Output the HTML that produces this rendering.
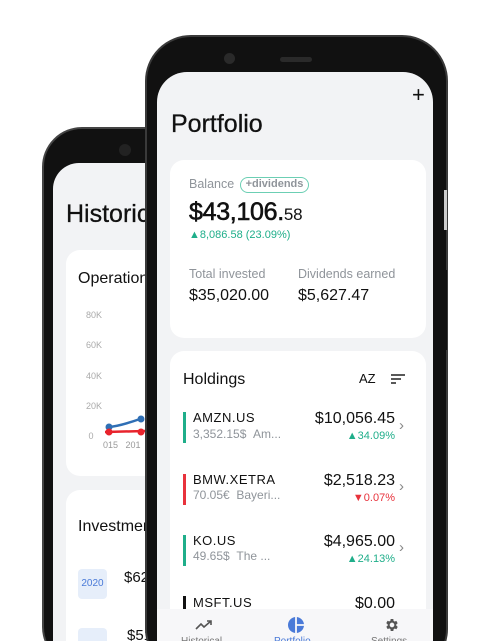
<!DOCTYPE html><html style="width:504px;height:641px;overflow:hidden"><head><style>
*{margin:0;padding:0;box-sizing:border-box}
body{width:504px;height:641px;overflow:hidden;background:#fff;font-family:"Liberation Sans",sans-serif;position:relative}
.a{position:absolute}
.g{color:#8f949a}
.t{color:#1fae8a}
.r{color:#e8323c}
</style></head><body>
<!-- back phone -->
<div class="a" style="left:42px;top:127px;width:200px;height:540px;background:#111;border-radius:40px;border:2px solid #444"></div>
<div class="a" style="left:53px;top:163px;width:180px;height:478px;background:#f2f3f5;border-radius:26px 26px 0 0"></div>
<div class="a" style="left:119px;top:144px;width:12px;height:12px;border-radius:50%;background:#222"></div>
<div class="a" style="left:66px;top:200px;font-size:25px;color:#111;-webkit-text-stroke:.3px #111">Historical</div>
<div class="a" style="left:66px;top:250px;width:120px;height:226px;background:#fff;border-radius:14px"></div>
<div class="a" style="left:78px;top:270px;font-size:16px;color:#111">Operations</div>
<div class="a g" style="left:86px;top:300px;font-size:9px;line-height:30.3px;color:#aaa">80K<br>60K<br>40K<br>20K<br>&nbsp;0</div>
<svg class="a" style="left:100px;top:410px" width="60" height="40"><path d="M9 17 Q20 16 40 9" stroke="#2f6fb5" stroke-width="2.5" fill="none"/><path d="M5 22 L45 21" stroke="#e8232c" stroke-width="2.5"/><circle cx="9" cy="17" r="3.5" fill="#2f6fb5"/><circle cx="41" cy="9" r="3.5" fill="#2f6fb5"/><circle cx="9" cy="22" r="3.5" fill="#e8232c"/><circle cx="41" cy="22" r="3.5" fill="#e8232c"/></svg>
<div class="a" style="left:103px;top:440px;font-size:9px;color:#999">015&nbsp;&nbsp;&nbsp;201</div>
<div class="a" style="left:66px;top:490px;width:120px;height:151px;background:#fff;border-radius:14px 14px 0 0"></div>
<div class="a" style="left:78px;top:518px;font-size:16px;color:#111">Investments</div>
<div class="a" style="left:78px;top:569px;width:29px;height:30px;background:#e6eefa;border-radius:4px;color:#4a7ad8;font-size:10px;text-align:center;line-height:30px">2020</div>
<div class="a" style="left:124px;top:569px;font-size:15px;color:#111">$62</div>
<div class="a" style="left:78px;top:628px;width:29px;height:13px;background:#e6eefa;border-radius:4px 4px 0 0"></div>
<div class="a" style="left:127px;top:627px;font-size:15px;color:#111">$51</div>
<!-- front phone -->
<div class="a" style="left:145px;top:35px;width:303px;height:640px;background:#111;border-radius:46px;border:2px solid #3a3a3a"></div>
<div class="a" style="left:444px;top:190px;width:3px;height:40px;background:#ccc"></div>
<div class="a" style="left:444px;top:270px;width:3px;height:80px;background:#111"></div>
<div class="a" style="left:224px;top:53px;width:11px;height:11px;border-radius:50%;background:#2a2a2a"></div>
<div class="a" style="left:280px;top:57px;width:32px;height:5px;border-radius:3px;background:#2a2a2a"></div>
<div class="a" style="left:157px;top:72px;width:276px;height:569px;background:#f2f3f5;border-radius:30px 30px 0 0;overflow:hidden">
 <div class="a" style="left:255px;top:10px;font-size:22px;color:#111;font-weight:300">+</div>
 <div class="a" style="left:14px;top:38px;font-size:25px;color:#111;-webkit-text-stroke:.3px #111">Portfolio</div>
 <div class="a" style="left:13px;top:88px;width:256px;height:178px;background:#fff;border-radius:14px">
  <div class="a g" style="left:19px;top:17px;font-size:12.5px">Balance</div>
  <div class="a" style="left:70px;top:17px;width:69px;height:16px;border:1.5px solid #6ccfb4;border-radius:8px;font-size:11px;color:#8f949a;text-align:center;line-height:13px;font-weight:bold">+dividends</div>
  <div class="a" style="left:19px;top:38px;font-size:25px;color:#111;-webkit-text-stroke:.6px #111;letter-spacing:-0.3px">$43,106.<span style="font-size:17px;-webkit-text-stroke:0">58</span></div>
  <div class="a t" style="left:19px;top:69px;font-size:11px">▲8,086.58 (23.09%)</div>
  <div class="a g" style="left:19px;top:107px;font-size:12.5px">Total invested</div>
  <div class="a g" style="left:128px;top:107px;font-size:12.5px">Dividends earned</div>
  <div class="a" style="left:19px;top:127px;font-size:16px;color:#111">$35,020.00</div>
  <div class="a" style="left:128px;top:127px;font-size:16px;color:#111">$5,627.47</div>
 </div>
 <div class="a" style="left:13px;top:279px;width:256px;height:400px;background:#fff;border-radius:14px">
  <div class="a" style="left:13px;top:20px;font-size:16px;color:#111">Holdings</div>
  <div class="a" style="left:189px;top:20px;font-size:13px;color:#111">AZ</div>
  <svg class="a" style="left:220px;top:22px" width="16" height="12"><path d="M1 2h14M1 6h10M1 10h5" stroke="#222" stroke-width="1.6"/></svg>
 </div>
 <div class="a" style="left:0;top:0;width:276px">
  <div class="a" style="left:26px;top:340px;width:3px;height:31px;background:#1fae8a"></div>
  <div class="a" style="left:36px;top:338px;font-size:13px;color:#111;letter-spacing:.5px">AMZN.US</div>
  <div class="a g" style="left:36px;top:355px;font-size:12px">3,352.15$ &nbsp;Am...</div>
  <div class="a" style="left:138px;top:338px;width:100px;text-align:right;font-size:16px;color:#111">$10,056.45</div>
  <div class="a t" style="left:138px;top:358px;width:100px;text-align:right;font-size:11px">▲34.09%</div>
  <div class="a" style="left:242px;top:345px;font-size:15px;color:#888">›</div>

  <div class="a" style="left:26px;top:402px;width:3px;height:31px;background:#e8323c"></div>
  <div class="a" style="left:36px;top:400px;font-size:13px;color:#111;letter-spacing:.5px">BMW.XETRA</div>
  <div class="a g" style="left:36px;top:416px;font-size:12px">70.05€ &nbsp;Bayeri...</div>
  <div class="a" style="left:138px;top:400px;width:100px;text-align:right;font-size:16px;color:#111">$2,518.23</div>
  <div class="a r" style="left:138px;top:420px;width:100px;text-align:right;font-size:11px">▼0.07%</div>
  <div class="a" style="left:242px;top:406px;font-size:15px;color:#888">›</div>

  <div class="a" style="left:26px;top:463px;width:3px;height:31px;background:#1fae8a"></div>
  <div class="a" style="left:36px;top:461px;font-size:13px;color:#111;letter-spacing:.5px">KO.US</div>
  <div class="a g" style="left:36px;top:477px;font-size:12px">49.65$ &nbsp;The ...</div>
  <div class="a" style="left:138px;top:461px;width:100px;text-align:right;font-size:16px;color:#111">$4,965.00</div>
  <div class="a t" style="left:138px;top:481px;width:100px;text-align:right;font-size:11px">▲24.13%</div>
  <div class="a" style="left:242px;top:467px;font-size:15px;color:#888">›</div>

  <div class="a" style="left:26px;top:524px;width:3px;height:16px;background:#111"></div>
  <div class="a" style="left:36px;top:523px;font-size:13px;color:#111;letter-spacing:.5px">MSFT.US</div>
  <div class="a" style="left:138px;top:523px;width:100px;text-align:right;font-size:16px;color:#111">$0.00</div>
 </div>
 <div class="a" style="left:0;top:537px;width:276px;height:90px;background:#f7f7f9">
  <svg class="a" style="left:38px;top:10px" width="18" height="12"><path d="M1 10l5-5 3 3 7-6M12 2h4v4" stroke="#555" stroke-width="1.6" fill="none"/></svg>
  <svg class="a" style="left:131px;top:8px" width="16" height="16"><circle cx="8" cy="8" r="8" fill="#4a7ad8"/><path d="M8 0v16M8 8h8" stroke="#f7f7f9" stroke-width="1.8"/></svg>
  <svg class="a" style="left:227px;top:8px" width="16" height="16" viewBox="0 0 24 24"><path fill="#555" d="M19.4 13a7.5 7.5 0 000-2l2.1-1.6-2-3.5-2.5 1a7 7 0 00-1.7-1L15 3h-4l-.4 2.7a7 7 0 00-1.7 1l-2.5-1-2 3.5L6.6 11a7.5 7.5 0 000 2l-2.1 1.6 2 3.5 2.5-1a7 7 0 001.7 1L11 21h4l.4-2.7a7 7 0 001.7-1l2.5 1 2-3.5zM13 15.5a3.5 3.5 0 110-7 3.5 3.5 0 010 7z" transform="translate(-1 0)"/></svg>
  <div class="a" style="left:24px;top:27px;font-size:10px;color:#777">Historical</div>
  <div class="a" style="left:117px;top:27px;font-size:10px;color:#4a7ad8">Portfolio</div>
  <div class="a" style="left:214px;top:27px;font-size:10px;color:#777">Settings</div>
 </div>
</div>
</body></html>
